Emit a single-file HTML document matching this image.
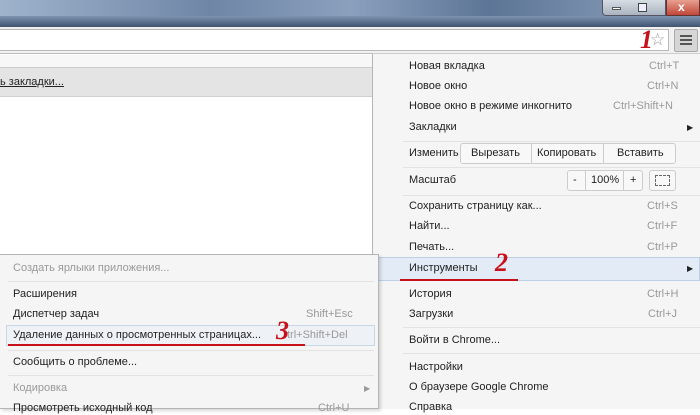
<!DOCTYPE html>
<html><head><meta charset="utf-8"><style>
*{margin:0;padding:0;box-sizing:border-box}
body{width:700px;height:409px;overflow:hidden;position:relative;background:#fff;font-family:"Liberation Sans","DejaVu Sans",sans-serif;font-size:11px;color:#222}
.a{position:absolute}
.t{position:absolute;white-space:nowrap;line-height:13px}
.g{color:#999}
.sep{position:absolute;height:1px;background:#e2e2e2}
.red{position:absolute;background:#c8101a;height:2px}
.num{position:absolute;font-family:"Liberation Serif",serif;font-style:italic;font-weight:bold;color:#c8101a;font-size:26px;line-height:26px}
</style></head><body>
<div class="a" style="left:0;top:0;width:700px;height:27px;background:linear-gradient(90deg,#9fb3cc,#6f86a6 30%,#8aa0bd 50%,#5d7596 70%,#90a6c0);"></div>
<div class="a" style="left:0;top:16px;width:700px;height:11px;background:linear-gradient(#7e93af,#3f5470)"></div>
<div class="a" style="left:602px;top:0;width:64px;height:16px;background:linear-gradient(#d8dde4,#a9b3bf);border:1px solid #556;border-top:none;border-radius:0 0 0 4px"></div>
<div class="a" style="left:612px;top:7px;width:9px;height:3px;background:#fff;border:1px solid #555"></div>
<div class="a" style="left:638px;top:3px;width:9px;height:9px;border:1px solid #444;background:#eef"></div>
<div class="a" style="left:666px;top:0;width:34px;height:16px;background:linear-gradient(#e8a090,#c0473a);border:1px solid #633;border-top:none"></div>
<div class="t" style="left:678px;top:1px;color:#fff;font-weight:bold;font-size:12px">x</div>
<div class="a" style="left:0;top:27px;width:700px;height:27px;background:#f1f1f1;border-bottom:1px solid #bbb"></div>
<div class="a" style="left:0;top:29px;width:669px;height:22px;background:#fff;border:1px solid #b8b8b8;border-left:none"></div>
<div class="t" style="left:650px;top:31px;font-size:17px;color:#999;line-height:17px">☆</div>
<div class="a" style="left:674px;top:29px;width:24px;height:23px;background:#d6d6d6;border:1px solid #aaa;border-radius:2px"></div>
<div class="a" style="left:680px;top:35px;width:12px;height:2px;background:#555;box-shadow:0 4px 0 #555,0 8px 0 #555"></div>
<div class="num" style="left:640px;top:27px">1</div>
<div class="red" style="left:620px;top:56px;width:80px"></div>
<div class="a" style="left:0;top:55px;width:372px;height:12px;background:#f7f7f7"></div>
<div class="a" style="left:0;top:67px;width:372px;height:30px;background:#e4e4e4;border-top:1px solid #ccc;border-bottom:1px solid #d0d0d0"></div>
<div class="t" style="left:0;top:76px;text-decoration:underline">ь закладки...</div>

<div class="a" style="left:372px;top:53px;width:328px;height:356px;background:#f5f5f5;border-left:1px solid #b5b5b5;border-top:1px solid #ccc"></div>
<div class="t" style="left:409px;top:60px">Новая вкладка</div><div class="t g" style="left:649px;top:60px">Ctrl+T</div>
<div class="t" style="left:409px;top:80px">Новое окно</div><div class="t g" style="left:647px;top:80px">Ctrl+N</div>
<div class="t" style="left:409px;top:100px">Новое окно в режиме инкогнито</div><div class="t g" style="left:613px;top:100px">Ctrl+Shift+N</div>
<div class="t" style="left:409px;top:121px">Закладки</div><div class="t" style="left:687px;top:121px;font-size:8px">▶</div>
<div class="sep" style="left:403px;top:141px;width:297px"></div>
<div class="t" style="left:409px;top:147px">Изменить</div>
<div class="a" style="left:460px;top:143px;width:216px;height:21px;border:1px solid #ccc;border-radius:3px;background:#f8f8f8"></div>
<div class="a" style="left:531px;top:144px;width:1px;height:19px;background:#ccc"></div>
<div class="a" style="left:603px;top:144px;width:1px;height:19px;background:#ccc"></div>
<div class="t" style="left:471px;top:147px">Вырезать</div><div class="t" style="left:537px;top:147px">Копировать</div><div class="t" style="left:617px;top:147px">Вставить</div>
<div class="sep" style="left:403px;top:167px;width:297px"></div>
<div class="t" style="left:409px;top:174px">Масштаб</div>
<div class="a" style="left:567px;top:170px;width:76px;height:21px;border:1px solid #ccc;border-radius:3px;background:#f8f8f8"></div>
<div class="a" style="left:585px;top:171px;width:1px;height:19px;background:#ccc"></div>
<div class="a" style="left:623px;top:171px;width:1px;height:19px;background:#ccc"></div>
<div class="t" style="left:573px;top:174px">-</div><div class="t" style="left:591px;top:174px">100%</div><div class="t" style="left:630px;top:174px">+</div>
<div class="a" style="left:649px;top:170px;width:27px;height:21px;border:1px solid #ccc;border-radius:3px;background:#f8f8f8"></div>
<div class="a" style="left:655px;top:175px;width:15px;height:11px;border:1px dashed #666"></div>
<div class="sep" style="left:403px;top:195px;width:297px"></div>
<div class="t" style="left:409px;top:200px">Сохранить страницу как...</div><div class="t g" style="left:647px;top:200px">Ctrl+S</div>
<div class="t" style="left:409px;top:220px">Найти...</div><div class="t g" style="left:647px;top:220px">Ctrl+F</div>
<div class="t" style="left:409px;top:241px">Печать...</div><div class="t g" style="left:647px;top:241px">Ctrl+P</div>
<div class="a" style="left:378px;top:257px;width:322px;height:24px;background:#e3ebf6;border:1px solid #bcd0e8"></div>
<div class="t" style="left:409px;top:262px">Инструменты</div><div class="t" style="left:687px;top:262px;font-size:8px">▶</div>
<div class="num" style="left:495px;top:250px">2</div>
<div class="red" style="left:400px;top:279px;width:118px"></div>
<div class="t" style="left:409px;top:288px">История</div><div class="t g" style="left:647px;top:288px">Ctrl+H</div>
<div class="t" style="left:409px;top:308px">Загрузки</div><div class="t g" style="left:648px;top:308px">Ctrl+J</div>
<div class="sep" style="left:403px;top:327px;width:297px"></div>
<div class="t" style="left:409px;top:334px">Войти в Chrome...</div>
<div class="sep" style="left:403px;top:353px;width:297px"></div>
<div class="t" style="left:409px;top:361px">Настройки</div>
<div class="t" style="left:409px;top:381px">О браузере Google Chrome</div>
<div class="t" style="left:409px;top:401px">Справка</div>

<div class="a" style="left:0;top:254px;width:379px;height:155px;background:#f5f5f5;border:1px solid #b5b5b5;border-left:none;box-shadow:2px 2px 3px rgba(0,0,0,.15)"></div>
<div class="t g" style="left:13px;top:262px">Создать ярлыки приложения...</div>
<div class="sep" style="left:8px;top:281px;width:366px"></div>
<div class="t" style="left:13px;top:288px">Расширения</div>
<div class="t" style="left:13px;top:308px">Диспетчер задач</div><div class="t g" style="left:306px;top:308px">Shift+Esc</div>
<div class="a" style="left:6px;top:325px;width:369px;height:21px;background:#eef2f7;border:1px solid #c9d6e6"></div>
<div class="t" style="left:13px;top:329px">Удаление данных о просмотренных страницах...</div><div class="t g" style="left:287px;top:329px">trl+Shift+Del</div>
<div class="num" style="left:276px;top:318px">3</div>
<div class="red" style="left:8px;top:344px;width:297px"></div>
<div class="sep" style="left:8px;top:350px;width:366px"></div>
<div class="t" style="left:13px;top:356px">Сообщить о проблеме...</div>
<div class="sep" style="left:8px;top:375px;width:366px"></div>
<div class="t g" style="left:13px;top:382px">Кодировка</div><div class="t g" style="left:364px;top:382px;font-size:8px">▶</div>
<div class="t" style="left:13px;top:402px">Просмотреть исходный код</div><div class="t g" style="left:318px;top:402px">Ctrl+U</div>
</body></html>
